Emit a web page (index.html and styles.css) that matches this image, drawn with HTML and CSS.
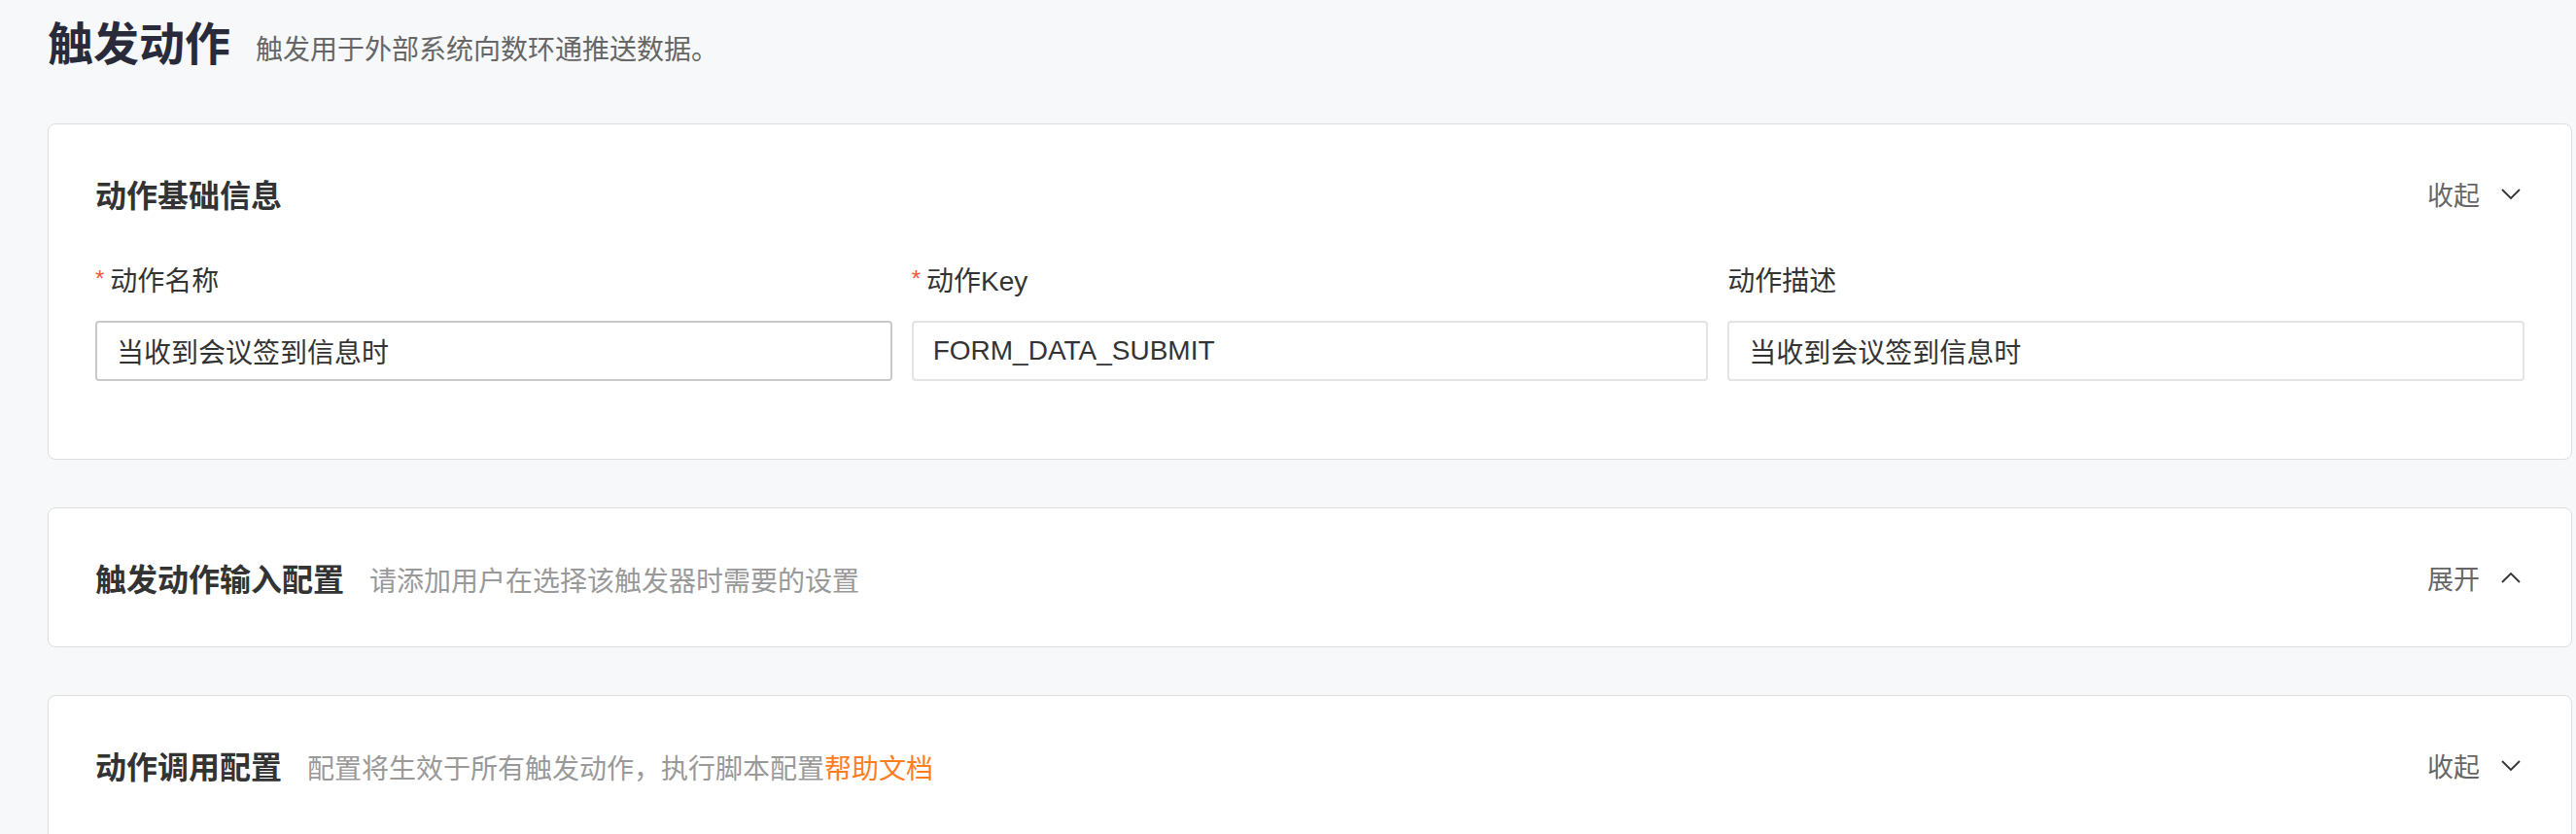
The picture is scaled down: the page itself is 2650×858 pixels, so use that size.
FILE: index.html
```html
<!DOCTYPE html>
<html lang="zh-CN">
<head>
  <meta charset="UTF-8" />
  <title>触发动作</title>
  <link rel="stylesheet" href="styles.css">
</head>
<body>

  <div class="page">
    <!-- Page header -->
    <div class="page-header">
      <h1 class="page-title">触发动作</h1>
      <span class="page-desc">触发用于外部系统向数环通推送数据。</span>
    </div>

    <!-- Basic info -->
    <div class="card">
      <div class="card-head">
        <div class="card-title">动作基础信息</div>
        <a class="toggle">收起
          <svg class="chevron" width="20" height="11" viewBox="0 0 20 11"><polyline points="1,1 10,10 19,1" /></svg>
        </a>
      </div>
      <div class="card-body">
        <div class="form-row">
          <div class="field">
            <label class="label"><span class="req">*</span>动作名称</label>
            <input class="input active" type="text" value="当收到会议签到信息时">
          </div>
          <div class="field">
            <label class="label"><span class="req">*</span>动作Key</label>
            <input class="input" type="text" value="FORM_DATA_SUBMIT">
          </div>
          <div class="field">
            <label class="label">动作描述</label>
            <input class="input" type="text" value="当收到会议签到信息时">
          </div>
        </div>
      </div>
    </div>

    <!-- Input config -->
    <div class="card">
      <div class="card-head">
        <div class="card-title">触发动作输入配置<span class="card-desc">请添加用户在选择该触发器时需要的设置</span></div>
        <a class="toggle">展开
          <svg class="chevron" width="20" height="11" viewBox="0 0 20 11"><polyline points="1,10 10,1 19,10" /></svg>
        </a>
      </div>
    </div>

    <!-- Call config -->
    <div class="card">
      <div class="card-head">
        <div class="card-title">动作调用配置<span class="card-desc">配置将生效于所有触发动作，执行脚本配置<a class="help">帮助文档</a></span></div>
        <a class="toggle">收起
          <svg class="chevron" width="20" height="11" viewBox="0 0 20 11"><polyline points="1,1 10,10 19,1" /></svg>
        </a>
      </div>
      <div class="card-body tall"></div>
    </div>
  </div>

</body>
</html>
```

FILE: styles.css
```css
body {
  margin: 0;
  padding: 0;
  background: #f7f8fa;
  font-family: 'Liberation Sans', 'Noto Sans CJK SC', sans-serif;
  color: #333;
  overflow: hidden;
}

.page {
  padding: 0 4px 0 49px;
}

.page-header {
  display: flex;
  align-items: center;
  padding-top: 14px;
  height: 64px;
  margin-bottom: 49px;
}

.page-title {
  margin: 0;
  font-size: 47px;
  font-weight: bold;
  color: #2a2b3a;
  line-height: 64px;
}

.page-desc {
  margin-left: 26px;
  margin-top: 6px;
  font-size: 28px;
  color: #666;
}

.card {
  background: #fff;
  border: 1px solid #dedede;
  border-radius: 8px;
  margin-bottom: 49px;
  padding: 0 48px;
}

.card-head {
  display: flex;
  align-items: center;
  justify-content: space-between;
  height: 142px;
}

.card-title {
  font-size: 32px;
  font-weight: bold;
  color: #333;
}

.card-desc {
  margin-left: 26px;
  font-size: 28px;
  font-weight: normal;
  color: #999;
}

.help {
  color: #ff7d1f;
  cursor: pointer;
}

.toggle {
  display: flex;
  align-items: center;
  font-size: 27px;
  color: #666;
  cursor: pointer;
}

.chevron {
  margin-left: 22px;
  margin-right: 4px;
}

.chevron polyline {
  fill: none;
  stroke: #333;
  stroke-width: 1.8;
}

.card-body {
  padding: 0 0 80px;
}

.card-body.tall {
  height: 200px;
}

.form-row {
  display: grid;
  grid-template-columns: 1fr 1fr 1fr;
  gap: 20px;
}

.field {
  display: flex;
  flex-direction: column;
}

.label {
  font-size: 28px;
  line-height: 40px;
  height: 40px;
  margin-bottom: 20px;
  color: #333;
}

.req {
  color: #f5583a;
  font-size: 24px;
  vertical-align: top;
  margin-right: 6px;
  position: relative;
  top: -3px;
}

.input {
  height: 62px;
  box-sizing: border-box;
  padding: 0 20px;
  border: 2px solid #e4e4e4;
  border-radius: 4px;
  font-family: 'Liberation Sans', 'Noto Sans CJK SC', sans-serif;
  font-size: 28px;
  color: #333;
  outline: none;
  background: #fff;
}

.input.active {
  border-color: #c9c9c9;
}
```
